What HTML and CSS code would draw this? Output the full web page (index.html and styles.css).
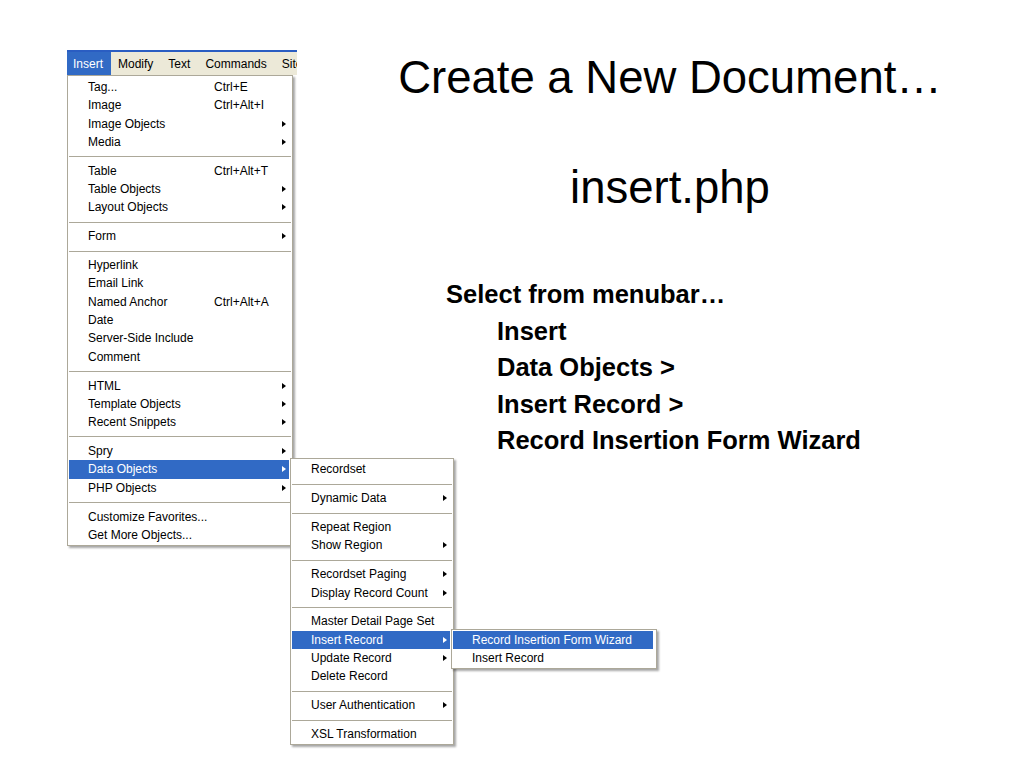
FILE: index.html
```html
<!DOCTYPE html>
<html lang="en">
<head>
    <meta charset="UTF-8">
    <title>Create a New Document</title>
    <link rel="stylesheet" href="styles.css">
</head>
<body>
    <div class="slide">
        <div class="shot">
            <div class="menubar">
                <span class="bar-item active">Insert</span>
                <span class="bar-item">Modify</span>
                <span class="bar-item">Text</span>
                <span class="bar-item">Commands</span>
                <span class="bar-item">Site</span>
            </div>

            <ul class="menu main-menu">
                <li class="item"><span class="label">Tag...</span><span class="key">Ctrl+E</span></li>
                <li class="item"><span class="label">Image</span><span class="key">Ctrl+Alt+I</span></li>
                <li class="item sub"><span class="label">Image Objects</span></li>
                <li class="item sub"><span class="label">Media</span></li>
                <li class="sep"></li>
                <li class="item"><span class="label">Table</span><span class="key">Ctrl+Alt+T</span></li>
                <li class="item sub"><span class="label">Table Objects</span></li>
                <li class="item sub"><span class="label">Layout Objects</span></li>
                <li class="sep"></li>
                <li class="item sub"><span class="label">Form</span></li>
                <li class="sep"></li>
                <li class="item"><span class="label">Hyperlink</span></li>
                <li class="item"><span class="label">Email Link</span></li>
                <li class="item"><span class="label">Named Anchor</span><span class="key">Ctrl+Alt+A</span></li>
                <li class="item"><span class="label">Date</span></li>
                <li class="item"><span class="label">Server-Side Include</span></li>
                <li class="item"><span class="label">Comment</span></li>
                <li class="sep"></li>
                <li class="item sub"><span class="label">HTML</span></li>
                <li class="item sub"><span class="label">Template Objects</span></li>
                <li class="item sub"><span class="label">Recent Snippets</span></li>
                <li class="sep"></li>
                <li class="item sub"><span class="label">Spry</span></li>
                <li class="item sub active"><span class="label">Data Objects</span>
                    <ul class="menu submenu data-menu">
                        <li class="item"><span class="label">Recordset</span></li>
                        <li class="sep"></li>
                        <li class="item sub"><span class="label">Dynamic Data</span></li>
                        <li class="sep"></li>
                        <li class="item"><span class="label">Repeat Region</span></li>
                        <li class="item sub"><span class="label">Show Region</span></li>
                        <li class="sep"></li>
                        <li class="item sub"><span class="label">Recordset Paging</span></li>
                        <li class="item sub"><span class="label">Display Record Count</span></li>
                        <li class="sep"></li>
                        <li class="item"><span class="label">Master Detail Page Set</span></li>
                        <li class="item sub active"><span class="label">Insert Record</span>
                            <ul class="menu submenu record-menu">
                                <li class="item active"><span class="label">Record Insertion Form Wizard</span></li>
                                <li class="item"><span class="label">Insert Record</span></li>
                            </ul>
                        </li>
                        <li class="item sub"><span class="label">Update Record</span></li>
                        <li class="item"><span class="label">Delete Record</span></li>
                        <li class="sep"></li>
                        <li class="item sub"><span class="label">User Authentication</span></li>
                        <li class="sep"></li>
                        <li class="item"><span class="label">XSL Transformation</span></li>
                    </ul>
                </li>
                <li class="item sub"><span class="label">PHP Objects</span></li>
                <li class="sep"></li>
                <li class="item"><span class="label">Customize Favorites...</span></li>
                <li class="item"><span class="label">Get More Objects...</span></li>
            </ul>
        </div>

        <div class="notes">
            <h1>Create a New Document…</h1>
            <h2>insert.php</h2>
            <div class="steps">
                <p>Select from menubar…</p>
                <ul>
                    <li>Insert</li>
                    <li>Data Objects &gt;</li>
                    <li>Insert Record &gt;</li>
                    <li>Record Insertion Form Wizard</li>
                </ul>
            </div>
        </div>
    </div>
</body>
</html>
```

FILE: styles.css
```css
body {
    margin: 0;
    background-color: white;
    font-family: 'Liberation Sans', Arial, sans-serif;
    color: #000;
}

.slide {
    display: flex;
    width: 1024px;
    height: 768px;
    overflow: hidden;
}

/* left side: the menu screenshot */

.shot {
    width: 249px;
    padding: 50px 0 0 67px;
    font-size: 12px;
}

.menubar {
    display: flex;
    width: 230px;
    height: 22px;
    padding-top: 1px;
    line-height: 22px;
    border-top: 2px solid #2a5dc2;
    background-color: #ece9d8;
    overflow: hidden;
    white-space: nowrap;
}

.bar-item {
    padding: 0 9px 0 6px;
}

.bar-item.active {
    margin-top: -1px;
    padding-top: 1px;
    padding-right: 8px;
    background-color: #316ac5;
    color: white;
}

.bar-item.active + .bar-item {
    padding-left: 7px;
}

.menu {
    list-style: none;
    margin: 0;
    padding: 1px 3px 1px 1px;
    background-color: white;
    border: 1px solid #aca899;
    box-shadow: 2px 2px 2px rgba(0,0,0,0.35);
}

.main-menu {
    width: 220px;
    padding-top: 2px;
}

.item {
    position: relative;
    display: flex;
    height: 18.3px;
    line-height: 18.3px;
    padding-left: 19px;
    color: #000;
    white-space: nowrap;
}

.item.active {
    background-color: #316ac5;
}

.item.active > .label,
.item.active > .key {
    color: white;
}

.label {
    width: 126px;
}

.item.sub:after {
    content: "";
    position: absolute;
    right: 3px;
    top: 6px;
    border-style: solid;
    border-width: 3.5px 0 3.5px 4px;
    border-color: transparent transparent transparent #000;
}

.item.sub.active:after {
    border-left-color: white;
}

.sep {
    height: 10.6px;
    position: relative;
}

.sep:after {
    content: "";
    position: absolute;
    left: 0;
    right: -2px;
    top: 5px;
    border-top: 1px solid #aca899;
}

.submenu {
    position: absolute;
    left: calc(100% + 1px);
    top: -2px;
    z-index: 2;
}

.data-menu {
    width: 158px;
}

.record-menu {
    width: 200px;
}

/* right side: the notes */

.notes {
    flex: 1;
    padding-top: 52px;
}

h1, h2 {
    margin: 0;
    font-size: 45.5px;
    font-weight: normal;
    line-height: 52px;
    text-align: center;
}

h2 {
    margin-top: 58px;
}

.steps {
    margin-top: 62px;
    padding-left: 130px;
    font-size: 25.5px;
    font-weight: bold;
    line-height: 36.5px;
}

.steps p {
    margin: 0;
}

.steps ul {
    list-style: none;
    margin: 0;
    padding-left: 51px;
}
```
